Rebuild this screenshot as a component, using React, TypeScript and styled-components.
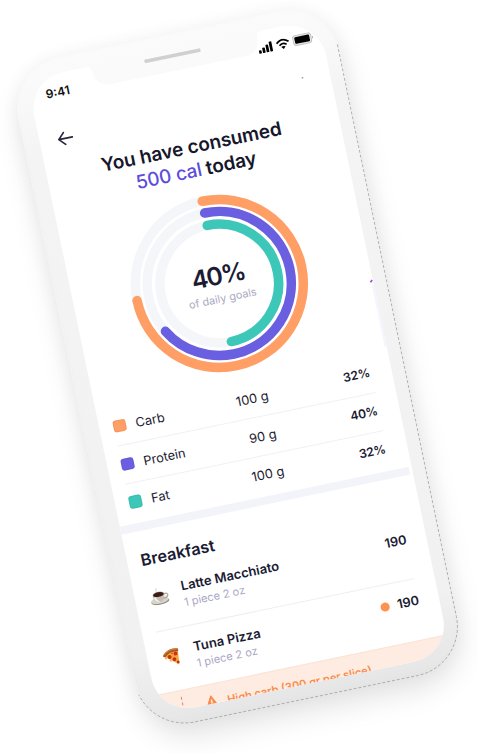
import React from "react";
import styled, { createGlobalStyle } from "styled-components";

const INK = "#1b1b33";
const ORANGE = "#ff9f65";
const PURPLE = "#6a5fe0";
const TEAL = "#3cc7b8";

const GlobalStyle = createGlobalStyle`
  * { box-sizing: border-box; }
  html, body { margin: 0; background: #fff; overflow: hidden; }
  body { font-family: Inter, "Liberation Sans", sans-serif; color: ${INK}; }
  svg { display: block; }
`;

const Stage = styled.main`
  width: 478px;
  height: 753px;
  padding: 67.8px 0 0 8.4px;
  overflow: hidden;
`;

const Phone = styled.div`
  position: relative;
  width: 327.5px;
  height: 678.5px;
  padding: 14.5px 13.5px 14.5px 15.7px;
  border-radius: 51px;
  background: linear-gradient(180deg, #fbfbfb 0, #f9f9f9 34px, #f4f4f4 90px, #f1f1f1 600px, #e7e7e7 670px, #e4e4e4 100%);
  box-shadow: 0 14px 28px rgba(0, 0, 0, 0.1), 0 0 20px rgba(0, 0, 0, 0.04),
    inset 0 0 5px rgba(0, 0, 0, 0.02);
  transform: rotate(-11.75deg);
  transform-origin: 0 0;
`;

const EdgeLine = styled.svg`
  position: absolute;
  inset: 0;
  overflow: visible;
`;

const Notch = styled.svg`
  position: absolute;
  top: 13px;
  left: 74px;
`;

const Screen = styled.div`
  height: 100%;
  padding-right: 3px;
  border-radius: 37px;
  background: #fff;
  overflow: hidden;
`;

const StatusBar = styled.div`
  display: flex;
  justify-content: space-between;
  height: 38px;
  padding: 10px 5.5px 0 16px;
`;

const Time = styled.span`
  font-size: 12px;
  font-weight: 600;
  line-height: 18px;
  color: #111;
`;

const StatusIcons = styled.div`
  display: flex;
  align-items: center;
  gap: 3px;
  height: 15px;
`;

const Nav = styled.nav`
  height: 50.5px;
  padding: 20.5px 0 0 18.5px;
`;

const Heading = styled.h1`
  margin: 0;
  font-size: 19px;
  font-weight: 600;
  line-height: 23.5px;
  letter-spacing: -0.1px;
  text-align: center;
  color: #17172c;
  span { color: #5c4ddb; font-weight: 500; letter-spacing: -0.2px; }
`;

const Goal = styled.section`
  display: grid;
  place-items: center;
  margin-top: 13.7px;
  > * { grid-area: 1 / 1; }
`;

const GoalText = styled.div`
  padding-top: 2px;
  text-align: center;
`;

const GoalValue = styled.div`
  font-size: 25px;
  font-weight: 600;
  line-height: 30px;
  letter-spacing: -1.5px;
`;

const GoalNote = styled.div`
  font-size: 10.9px;
  line-height: 16.6px;
  color: #aaa9c1;
`;

const Macros = styled.section`
  margin: 10.3px 1.7px 3.3px 14.5px;
  padding-right: 2.3px;
`;

const MacroRow = styled.div`
  display: grid;
  grid-template-columns: 22.5px 58px 77.5px 1fr;
  align-items: center;
  height: 38.4px;
  margin-right: 13px;
  font-size: 12.8px;
  & + & { border-top: 1px solid #f1f1f3; }
`;

const Swatch = styled.i<{ $color: string }>`
  width: 12.5px;
  height: 12.5px;
  border-radius: 3px;
  background: ${(p) => p.$color};
  box-shadow: inset 0 0 0 1px rgba(0, 0, 0, 0.06);
`;

const Amount = styled.span`
  text-align: right;
`;

const Share = styled.span`
  padding-right: 2px;
  font-weight: 600;
  font-size: 12.2px;
  letter-spacing: -0.2px;
  line-height: 16px;
  padding-bottom: 1.5px;
  text-align: right;
`;

const Band = styled.div`
  height: 8px;
  background: #f3f3fa;
`;

const MealTitle = styled.h2`
  margin: 0;
  padding: 18px 0 0.5px 14px;
  font-size: 16.3px;
  font-weight: 600;
  line-height: 22px;
`;

const Food = styled.article<{ $height: number }>`
  display: grid;
  grid-template-columns: 33.5px 1fr auto;
  height: ${(p) => p.$height}px;
  margin: 0 17px 0 14.5px;
  padding-top: 13px;
  & + & { border-top: 1px solid #efeff2; }
`;

const FoodIcon = styled.div`
  padding: 4px 0 0 1px;
`;

const FoodName = styled.div`
  font-size: 13px;
  font-weight: 600;
  line-height: 17.5px;
`;

const Portion = styled.div`
  font-size: 11.1px;
  line-height: 17.5px;
  color: #aaa9c6;
`;

const Calories = styled.div`
  display: flex;
  align-items: center;
  gap: 8px;
  height: 17.5px;
  font-size: 12.8px;
  font-weight: 600;
`;

const Dot = styled.i`
  width: 8.5px;
  height: 8.5px;
  border-radius: 50%;
  background: #ff9250;
`;

const Warning = styled.aside`
  display: flex;
  height: 40px;
  margin-right: -3px;
  padding: 10.4px 0 0 25px;
  border-top: 1px solid #fbe4d8;
  background: #feece2;
  font-size: 11.1px;
  font-weight: 600;
  line-height: 17px;
  color: #f98b4c;
  white-space: nowrap;
`;

const DashedRule = styled.i`
  width: 1px;
  height: 20px;
  margin: -4px 22.5px 0 0;
  border-left: 1px dashed #d98c66;
`;

const WarningText = styled.span`
  margin-left: 9px;
`;

const rings = [
  { radius: 84, color: ORANGE, part: 0.75 },
  { radius: 72, color: PURPLE, part: 0.667 },
  { radius: 59.3, color: TEAL, part: 0.5 },
];

const macros = [
  { name: "Carb", amount: "100 g", share: "32%", color: ORANGE },
  { name: "Protein", amount: "90 g", share: "40%", color: PURPLE },
  { name: "Fat", amount: "100 g", share: "32%", color: TEAL },
];

const Signal = () => (
  <svg width="15" height="11" viewBox="0 0 15 11">
    <rect x="0" y="7" width="2.7" height="3.5" rx=".7" />
    <rect x="3.8" y="5" width="2.7" height="5.5" rx=".7" />
    <rect x="7.6" y="2.7" width="2.7" height="7.8" rx=".7" />
    <rect x="11.4" y="0.3" width="2.7" height="10.2" rx=".7" />
  </svg>
);

const Wifi = () => (
  <svg width="14" height="11" viewBox="0 0 14 11" fill="none" stroke="#000" strokeWidth="1.8">
    <path d="M.9 4Q7-1.8 13.1 4" />
    <path d="M3.4 6.5q3.6-3 7.2 0" />
    <path d="M4.8 8.2L7 10.5l2.2-2.3Q7 6.8 4.8 8.2z" fill="#000" stroke="none" />
  </svg>
);

const Battery = () => (
  <svg width="22" height="12" viewBox="0 0 22 12">
    <rect x=".7" y=".7" width="18.3" height="10" rx="2.6" fill="#e6e6e6" stroke="#c4c4c4" />
    <rect x="2.3" y="2.3" width="15.1" height="6.8" rx="1" />
    <path d="M20 4q1.8 1.7 0 3.4z" fill="#999" />
  </svg>
);

const BackArrow = () => (
  <svg width="16" height="15" viewBox="0 0 16 15" fill="none" stroke="#262640" strokeWidth="1.7" strokeLinecap="round" strokeLinejoin="round">
    <path d="M15 7.5H1.2M7 1.5L1.2 7.5 7 13.5" />
  </svg>
);

const Coffee = () => (
  <svg width="20" height="20" viewBox="0 0 20 20">
    <ellipse cx="9.5" cy="15.2" rx="9.2" ry="3.3" fill="#958e85" />
    <ellipse cx="9.2" cy="14.2" rx="9" ry="3.2" fill="#d9d4cc" />
    <path d="M14 8.6q5-.8 4 2.1-.9 2.3-4.7 2.2" fill="none" stroke="#b3ada4" strokeWidth="1.5" />
    <path d="M3.2 8.3q-.2 6.5 4 7.2h3.5q4.2-1.2 4.2-7.2z" fill="#c4beb5" />
    <path d="M4 10q0 4.3 3.7 5.4h1.5Q6.4 13.5 6 10z" fill="#f3f0eb" />
    <ellipse cx="9" cy="8.1" rx="5.9" ry="2.7" fill="#bdb5aa" />
    <ellipse cx="9" cy="8.2" rx="5.4" ry="2.3" fill="#3d1d16" />
    <path d="M8 4.5q-1.6-1.2.2-2.8" fill="none" stroke="#ddd" strokeWidth="1.2" />
  </svg>
);

const Pizza = () => (
  <svg width="19" height="20" viewBox="0 0 19 20">
    <path d="M1 7.2Q7.5.7 16.8 3.4L15.4 19z" fill="#f3a83c" />
    <path d="M.8 7.7Q7.5-.3 17.3 2.9l-.4 2.8Q9 3.2 3 9.1z" fill="#a75825" />
    <path d="M1.3 7Q8 .8 16.8 3.3" fill="none" stroke="#ce7d34" strokeWidth="1.1" />
    <path d="M2.8 9q.2 2.5 1.6 1.3M7 12.6q.8 1.8 1.4 1" fill="none" stroke="#f1b044" strokeWidth="1.2" />
    <circle cx="7.3" cy="9.5" r="2" fill="#c92d1e" />
    <circle cx="13.8" cy="7.4" r="2" fill="#ce3121" />
    <circle cx="11.6" cy="12.7" r="1.9" fill="#c92d1e" />
    <circle cx="14.7" cy="16.2" r="1.4" fill="#c92d1e" />
    <circle cx="10.5" cy="6.6" r=".8" fill="#d7442a" />
  </svg>
);

const Alert = () => (
  <svg width="13" height="13" viewBox="0 0 13 13">
    <path d="M6.5 1L12.3 12H.7z" fill="#f98b4c" stroke="#f98b4c" strokeLinejoin="round" />
    <path d="M6.5 4.8v4" stroke="#feece2" strokeWidth="1.5" />
  </svg>
);

const Rings = () => (
  <svg width="180" height="180" viewBox="-90 -90 180 180" fill="none" strokeWidth="9.5" strokeLinecap="round">
    {rings.map((r) => (
      <g key={r.radius} transform="rotate(-90)">
        <circle r={r.radius} stroke="#f5f6fa" />
        <circle r={r.radius} stroke={r.color} pathLength="1" strokeDasharray={`${r.part} 1`} />
      </g>
    ))}
  </svg>
);

export default function App() {
  return (
    <>
      <GlobalStyle />
      <Stage>
        <Phone>
          <Screen>
            <StatusBar>
              <Time>9:41</Time>
              <StatusIcons>
                <Signal />
                <Wifi />
                <Battery />
              </StatusIcons>
            </StatusBar>
            <Nav>
              <BackArrow />
            </Nav>
            <Heading>
              You have consumed
              <br />
              <span>500 cal</span> today
            </Heading>
            <Goal>
              <Rings />
              <GoalText>
                <GoalValue>40%</GoalValue>
                <GoalNote>of daily goals</GoalNote>
              </GoalText>
            </Goal>
            <Macros>
              {macros.map((m) => (
                <MacroRow key={m.name}>
                  <Swatch $color={m.color} />
                  <span>{m.name}</span>
                  <Amount>{m.amount}</Amount>
                  <Share>{m.share}</Share>
                </MacroRow>
              ))}
            </Macros>
            <Band />
            <MealTitle>Breakfast</MealTitle>
            <Food $height={60.6}>
              <FoodIcon><Coffee /></FoodIcon>
              <div>
                <FoodName>Latte Macchiato</FoodName>
                <Portion>1 piece 2 oz</Portion>
              </div>
              <Calories>190</Calories>
            </Food>
            <Food $height={62.4}>
              <FoodIcon><Pizza /></FoodIcon>
              <div>
                <FoodName>Tuna Pizza</FoodName>
                <Portion>1 piece 2 oz</Portion>
              </div>
              <Calories><Dot />190</Calories>
            </Food>
            <Warning>
              <DashedRule />
              <Alert />
              <WarningText>High carb (300 gr per slice)</WarningText>
            </Warning>
          </Screen>
          <Notch width="184" height="26" viewBox="0 0 184 26">
            <path d="M0 0h184v1.5q-8 0-8 6Q176 23.7 159 23.7H25Q8 23.7 8 7.5 8 1.5 0 1.5z" fill="#fafafa" />
            <rect x="61" y="6.7" width="57" height="3.6" fill="#d0d0d0" />
          </Notch>
          <EdgeLine width="327.5" height="678.5" fill="none">
            <path
              d="M327.3 44V628a50 50 0 0 1-50 50.3H51a51 51 0 0 1-50.5-38"
              stroke="#9a9a9a"
              strokeWidth="0.7"
              strokeDasharray="3 1.9"
            />
            <path d="M313 286v64" stroke="#f6f4ff" strokeWidth="2" />
            <path d="M311.3 283.5l2-1.8" stroke="#a34be8" strokeWidth="1.8" />
            <path d="M285.5 69.6h1.6" stroke="#777" strokeWidth="1" />
          </EdgeLine>
        </Phone>
      </Stage>
    </>
  );
}
